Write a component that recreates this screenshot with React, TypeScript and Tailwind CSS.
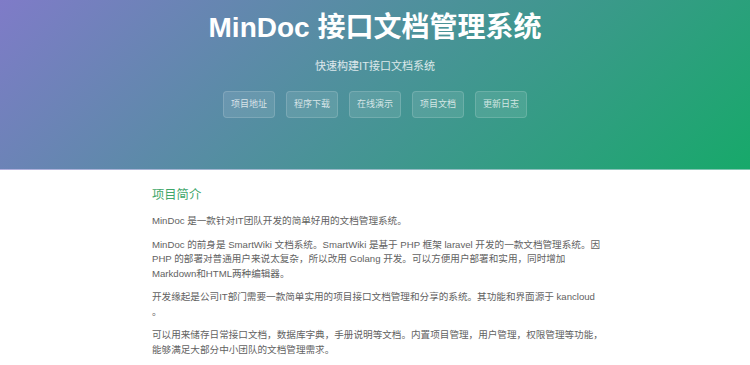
import React from "react";

const buttons = ["项目地址", "程序下载", "在线演示", "项目文档", "更新日志"];

export default function App() {
  return (
    <div
      className="w-[750px] h-[365px] overflow-hidden bg-white"
      style={{ fontFamily: '"Liberation Sans", "Noto Sans CJK SC", sans-serif' }}
    >
      <header className="h-[170px] border-b border-white/40 bg-[linear-gradient(135deg,#7f7bc8_0%,#17a96a_100%)] flex flex-col items-center pt-[11px]">
        <h1 className="text-[28px] leading-[34px] font-bold text-white">MinDoc 接口文档管理系统</h1>
        <p className="mt-[13px] text-[11px] leading-[16px] text-white/80">快速构建IT接口文档系统</p>
        <div className="mt-[17px] flex gap-[11px]">
          {buttons.map((b) => (
            <span
              key={b}
              className="h-[27px] w-[52px] flex items-center justify-center rounded-[4px] border border-white/15 bg-white/10 text-[9px] text-white/75"
            >
              {b}
            </span>
          ))}
        </div>
      </header>
      <main className="w-[446px] mx-auto pt-[16px] text-[9.6px] leading-[14.5px] text-[#626262]">
        <h2 className="text-[12.3px] leading-[18px] text-[#3fa76a]">项目简介</h2>
        <p className="mt-[10px] mb-[9px]">MinDoc 是一款针对IT团队开发的简单好用的文档管理系统。</p>
        <p className="mb-[9px] whitespace-nowrap">
          MinDoc 的前身是 SmartWiki 文档系统。SmartWiki 是基于 PHP 框架 laravel 开发的一款文档管理系统。因
          <br />
          PHP 的部署对普通用户来说太复杂，所以改用 Golang 开发。可以方便用户部署和实用，同时增加
          <br />
          Markdown和HTML两种编辑器。
        </p>
        <p className="mb-[9px] whitespace-nowrap">
          开发缘起是公司IT部门需要一款简单实用的项目接口文档管理和分享的系统。其功能和界面源于 kancloud
          <br />
          。
        </p>
        <p className="whitespace-nowrap">
          可以用来储存日常接口文档，数据库字典，手册说明等文档。内置项目管理，用户管理，权限管理等功能，
          <br />
          能够满足大部分中小团队的文档管理需求。
        </p>
      </main>
    </div>
  );
}
